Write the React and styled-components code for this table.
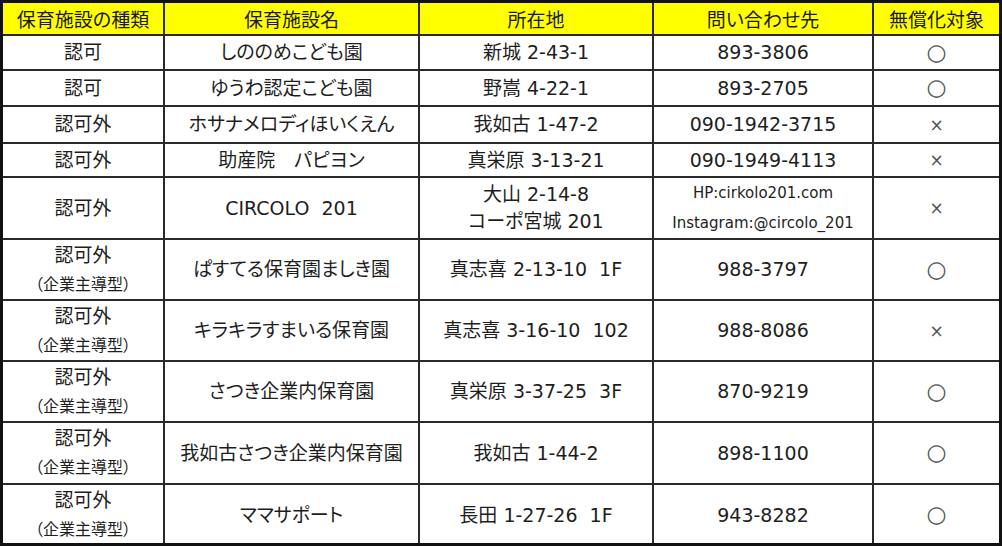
import React from 'react';
import styled, { createGlobalStyle } from 'styled-components';

const GlobalStyle = createGlobalStyle`
  html, body {
    margin: 0;
    padding: 0;
    background: #ffffff;
  }
  body {
    font-family: "DejaVu Sans", "Noto Sans CJK JP", sans-serif;
    color: #1e1e1e;
  }
`;

const columns = [161, 255, 234, 220, 126];

const headers = ['保育施設の種類', '保育施設名', '所在地', '問い合わせ先', '無償化対象'];

const rows = [
  { type: '認可', name: 'しののめこども園', address: ['新城 2-43-1'], contact: ['893-3806'], free: true, height: 35 },
  { type: '認可', name: 'ゆうわ認定こども園', address: ['野嵩 4-22-1'], contact: ['893-2705'], free: true, height: 36 },
  { type: '認可外', name: 'ホサナメロディほいくえん', address: ['我如古 1-47-2'], contact: ['090-1942-3715'], free: false, height: 37 },
  { type: '認可外', name: '助産院　パピヨン', address: ['真栄原 3-13-21'], contact: ['090-1949-4113'], free: false, height: 34 },
  { type: '認可外', name: 'CIRCOLO  201', address: ['大山 2-14-8', 'コーポ宮城 201'], contact: ['HP:cirkolo201.com', 'Instagram:@circolo_201'], small: true, free: false, height: 61 },
  { type: '認可外', sub: '（企業主導型）', name: 'ぱすてる保育園ましき園', address: ['真志喜 2-13-10  1F'], contact: ['988-3797'], free: true, height: 61 },
  { type: '認可外', sub: '（企業主導型）', name: 'キラキラすまいる保育園', address: ['真志喜 3-16-10  102'], contact: ['988-8086'], free: false, height: 61 },
  { type: '認可外', sub: '（企業主導型）', name: 'さつき企業内保育園', address: ['真栄原 3-37-25  3F'], contact: ['870-9219'], free: true, height: 61 },
  { type: '認可外', sub: '（企業主導型）', name: '我如古さつき企業内保育園', address: ['我如古 1-44-2'], contact: ['898-1100'], free: true, height: 62 },
  { type: '認可外', sub: '（企業主導型）', name: 'ママサポート', address: ['長田 1-27-26  1F'], contact: ['943-8282'], free: true, height: 61 },
];

const Frame = styled.div`
  width: 1002px;
  height: 546px;
  box-sizing: border-box;
  border: 3px solid #111111;
  overflow: hidden;
`;

const Table = styled.table`
  width: 996px;
  height: 540px;
  border-collapse: collapse;
  table-layout: fixed;
  border-style: hidden;
  font-feature-settings: "palt";
`;

const HeadCell = styled.th`
  background: #ffff00;
  height: 31px;
  padding: 0;
  font-size: 19px;
  font-weight: normal;
  text-align: center;
  vertical-align: middle;
  border: 2px solid #2a2a2a;
  color: #1a1a1a;
  white-space: nowrap;
`;

const Cell = styled.td`
  padding: 0;
  text-align: center;
  vertical-align: middle;
  border: 2px solid #2a2a2a;
  white-space: pre;
  line-height: ${({ $small }) => ($small ? '30px' : '27px')};
  font-size: ${({ $small }) => ($small ? '15px' : '19px')};
`;

const Sub = styled.div`
  font-size: 16px;
  line-height: 26px;
  margin-top: 3px;
`;

const Mark = styled.span`
  color: #555555;
  font-size: ${({ $circle }) => ($circle ? '23px' : '17px')};
`;

export default function App() {
  return (
    <>
      <GlobalStyle />
      <Frame>
        <Table>
          <colgroup>
            {columns.map((w, i) => (
              <col key={i} style={{ width: w }} />
            ))}
          </colgroup>
          <thead>
            <tr>
              {headers.map((h) => (
                <HeadCell key={h}>{h}</HeadCell>
              ))}
            </tr>
          </thead>
          <tbody>
            {rows.map((r) => (
              <tr key={r.name} style={{ height: r.height }}>
                <Cell>
                  <div>{r.type}</div>
                  {r.sub && <Sub>{r.sub}</Sub>}
                </Cell>
                <Cell>{r.name}</Cell>
                <Cell>
                  {r.address.map((a) => (
                    <div key={a}>{a}</div>
                  ))}
                </Cell>
                <Cell $small={r.small}>
                  {r.contact.map((c) => (
                    <div key={c}>{c}</div>
                  ))}
                </Cell>
                <Cell>
                  <Mark $circle={r.free}>{r.free ? '○' : '×'}</Mark>
                </Cell>
              </tr>
            ))}
          </tbody>
        </Table>
      </Frame>
    </>
  );
}
